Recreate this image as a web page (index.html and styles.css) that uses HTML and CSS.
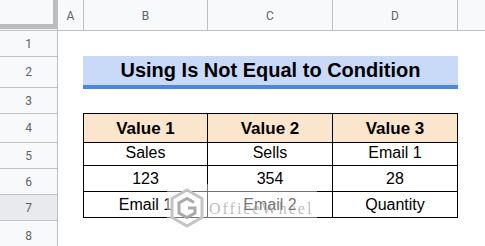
FILE: index.html
```html
<!DOCTYPE html>
<html lang="en">
<head>
<meta charset="utf-8">
<title>Using Is Not Equal to Condition</title>
<link rel="stylesheet" href="styles.css">
</head>
<body>
<div class="sheet">
  <div class="corner"><div class="freeze"></div></div>
  <div class="colheads">
    <div class="ch col-a">A</div>
    <div class="ch col-b">B</div>
    <div class="ch col-c">C</div>
    <div class="ch col-d">D</div>
    <div class="ch col-e"></div>
  </div>
  <div class="rowheads">
    <div class="rh h26">1</div>
    <div class="rh h31">2</div>
    <div class="rh h26">3</div>
    <div class="rh h29">4</div>
    <div class="rh h26">5</div>
    <div class="rh h26">6</div>
    <div class="rh h26 sel">7</div>
    <div class="rh h30">8</div>
  </div>
  <div class="cells">
    <div class="title">Using Is Not Equal to Condition</div>
    <div class="table">
      <div class="td th">Value 1</div>
      <div class="td th">Value 2</div>
      <div class="td th">Value 3</div>
      <div class="td">Sales</div>
      <div class="td">Sells</div>
      <div class="td">Email 1</div>
      <div class="td">123</div>
      <div class="td">354</div>
      <div class="td">28</div>
      <div class="td">Email 1</div>
      <div class="td">Email 2</div>
      <div class="td">Quantity</div>
    </div>
    <div class="watermark">
      <svg class="wm-logo" width="36" height="40" viewBox="0 0 36 40">
        <polygon points="18,2 33,10.5 33,29.5 18,38 3,29.5 3,10.5" fill="none" stroke="#c4c4c4" stroke-width="3"/>
        <path d="M25 14.5 L18 10.5 L10 15 V25 L18 29.5 L26 25 V20 H19" fill="none" stroke="#aaaaaa" stroke-width="3" stroke-linejoin="miter"/>
      </svg>
      <span class="wm-text">OfficeWheel</span>
    </div>
  </div>
</div>
</body>
</html>
```

FILE: styles.css
```css
* { box-sizing: border-box; }

html, body {
  margin: 0;
  padding: 0;
  background: #ffffff;
}

.sheet {
  width: 485px;
  height: 246px;
  overflow: hidden;
  display: grid;
  grid-template-columns: 58px 1fr;
  grid-template-rows: 31px 1fr;
  font-family: "Liberation Sans", Arial, sans-serif;
}

.corner {
  background: #f8f9fa;
  border-right: 1px solid #c0c0c0;
  border-bottom: 1px solid #c0c0c0;
}

.freeze {
  box-sizing: content-box;
  width: 53px;
  height: 24px;
  border-right: 4px solid #bdbdbd;
  border-bottom: 5px solid #bdbdbd;
}

.colheads {
  display: flex;
  background: #f8f9fa;
  border-bottom: 1px solid #c0c0c0;
}

.ch {
  display: flex;
  align-items: center;
  justify-content: center;
  font-family: Roboto, "Liberation Sans", Arial, sans-serif;
  font-size: 12px;
  color: #5f6368;
  padding-top: 1px;
}

.col-a { width: 25px; }
.col-b { width: 124px; border-left: 1px solid #c0c0c0; }
.col-c { width: 125px; border-left: 1px solid #c0c0c0; }
.col-d { width: 125px; border-left: 1px solid #c0c0c0; }
.col-e { flex: 1; border-left: 1px solid #c0c0c0; }

.rowheads {
  display: flex;
  flex-direction: column;
}

.rh {
  display: flex;
  align-items: center;
  justify-content: center;
  background: #f8f9fa;
  border-right: 1px solid #c0c0c0;
  border-bottom: 1px solid #c0c0c0;
  font-family: Roboto, "Liberation Sans", Arial, sans-serif;
  font-size: 12px;
  color: #5f6368;
  flex: none;
}

.rh.sel { background: #e8eaed; }

.h26 { height: 26px; }
.h29 { height: 29px; }
.h30 { height: 30px; }
.h31 { height: 31px; }

.cells {
  position: relative;
  padding-left: 25px;
  padding-top: 25px;
  display: flex;
  flex-direction: column;
  align-items: flex-start;
}

.title {
  width: 375px;
  height: 33px;
  background: #c9daf8;
  border-bottom: 4px solid #4a86e8;
  display: flex;
  align-items: center;
  justify-content: center;
  font-size: 20px;
  font-weight: bold;
  color: #000;
}

.table {
  margin-top: 24px;
  display: grid;
  grid-template-columns: 124px 125px 125px;
  grid-auto-rows: 26px;
  border-left: 1px solid #000;
  border-top: 1px solid #000;
}

.td {
  display: flex;
  align-items: center;
  justify-content: center;
  border-right: 1px solid #000;
  border-bottom: 1px solid #000;
  font-size: 16px;
  color: #000;
  padding-top: 1px;
}

.th {
  height: 29px;
  background: #fce5cd;
  font-size: 17px;
  font-weight: bold;
}

.watermark {
  position: absolute;
  left: 109px;
  top: 153px;
  width: 150px;
  height: 48px;
  background: rgba(255, 255, 255, 0.45);
  display: flex;
  align-items: center;
  gap: 4px;
  padding-left: 2px;
}

.wm-logo { flex: none; }

.wm-text {
  font-family: "Liberation Serif", "Times New Roman", serif;
  font-size: 16px;
  letter-spacing: 2px;
  color: rgba(130, 130, 130, 0.55);
  margin-top: 2px;
}
```
